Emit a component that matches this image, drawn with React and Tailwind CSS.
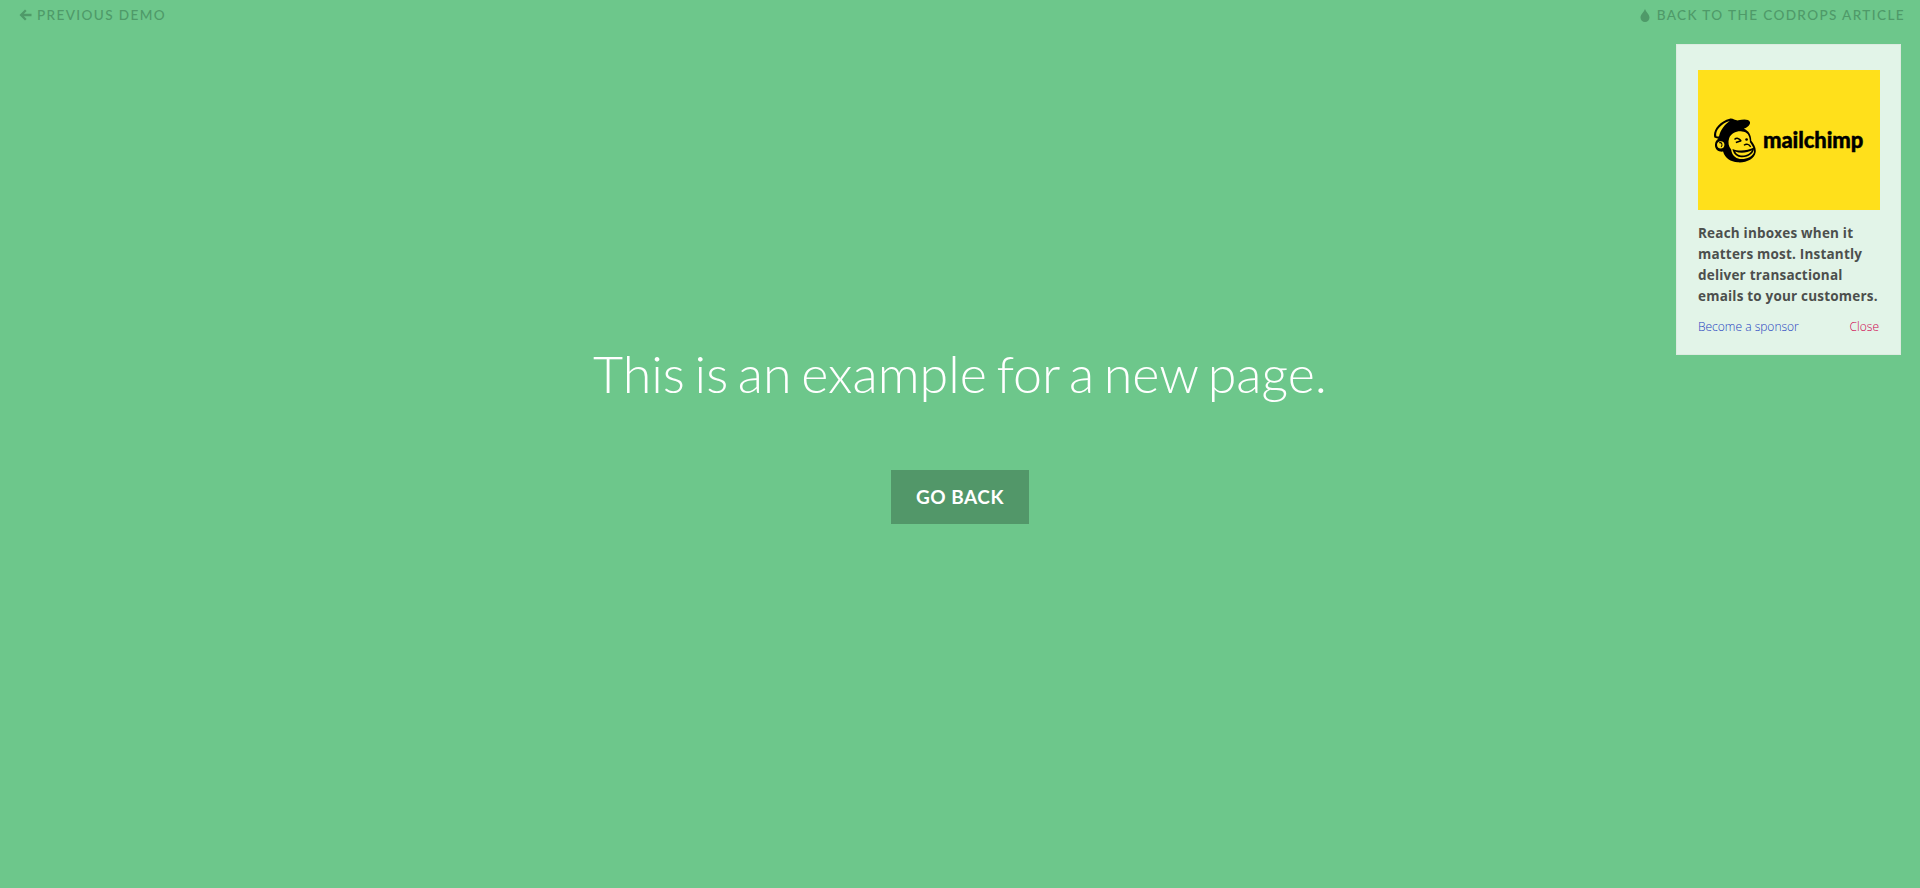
import React from "react";

const lato = { fontFamily: "Lato, sans-serif" };

const MonkeyLogo = () => (
  <svg width="43" height="45" viewBox="24 24 128 134" className="shrink-0">
    {/* head and cap silhouette */}
    <path d="M28 82 C22 62 42 34 74 26 C84 24 88 32 100 31 C112 28 130 26 134 36 C136 44 126 52 116 56 C130 62 138 74 138 92 C146 102 153 114 151 126 C148 146 122 158 98 156 C76 155 60 144 54 124 C40 126 28 116 30 102 C31 94 34 90 40 86 Z" fill="#000" />
    {/* yellow band of the cap */}
    <path d="M34 78 C30 62 48 40 74 33 C58 44 46 60 42 78 C40 79 37 80 34 78 Z" fill="#ffe01b" />
    {/* ear */}
    <circle cx="47" cy="104" r="13" fill="#ffe01b" stroke="#000" strokeWidth="4" />
    <path d="M42 98 C50 95 54 104 48 110" fill="none" stroke="#000" strokeWidth="3" />
    {/* face */}
    <path d="M72 84 C78 70 94 62 110 64 C126 64 134 76 134 96 C140 104 148 116 146 126 C142 140 122 148 104 146 C90 144 80 134 78 118 C70 108 68 96 72 84 Z" fill="#ffe01b" />
    {/* wink */}
    <path d="M88 88 C94 82 102 84 108 92 M92 97 L108 92" stroke="#000" strokeWidth="4.5" fill="none" />
    <circle cx="124" cy="88" r="4" fill="#000" />
    <path d="M116 105 C124 100 132 102 136 110" stroke="#000" strokeWidth="4" fill="none" />
    {/* mouth */}
    <path d="M82 116 C100 124 126 122 146 112 C148 130 126 144 104 140 C92 138 84 128 82 116 Z" fill="#000" />
    <path d="M90 124 C106 130 126 128 140 120 C134 132 118 138 104 135 C98 134 93 130 90 124 Z" fill="#ffe01b" />
  </svg>
);

export default function App() {
  return (
    <div className="relative flex h-screen flex-col bg-[#6dc78b] text-white" style={lato}>
      {/* top bar */}
      <div className="flex items-center justify-between pt-[7px] pr-[15px] pl-[19px] text-[13.6px] leading-[16px] tracking-[1.36px] text-[#4f9a69]">
        <a className="flex items-center gap-[5px] font-medium">
          <svg width="13" height="12" viewBox="0 0 13 12" fill="#4f9a69">
            <path d="M6 0.5 L7.6 2.1 L4.9 4.7 L12.5 4.7 L12.5 7.3 L4.9 7.3 L7.6 9.9 L6 11.5 L0.5 6 Z" />
          </svg>
          PREVIOUS DEMO
        </a>
        <a className="flex items-center gap-[7px] font-medium">
          <svg width="10" height="13" viewBox="0 0 10 13" fill="#4f9a69">
            <path d="M5 0 C6 3 9.5 5.5 9.5 8.5 C9.5 11 7.5 13 5 13 C2.5 13 0.5 11 0.5 8.5 C0.5 5.5 4 3 5 0 Z" />
          </svg>
          BACK TO THE CODROPS ARTICLE
        </a>
      </div>

      {/* main */}
      <main className="flex flex-col items-center pt-[316px]">
        <h1 className="text-[52px] leading-[68px] font-light [word-spacing:-4.5px]">This is an example for a new page.</h1>
        <a className="mt-[63px] flex h-[54px] w-[138px] items-center justify-center bg-[#529769] text-[19px] font-bold tracking-[0.5px]">
          GO BACK
        </a>
      </main>

      {/* sponsor card */}
      <aside className="absolute top-[44px] left-[1676px] h-[311px] w-[225px] border border-[#dcebe0] bg-[#e2f4e8] px-[21px] pt-[25px]" style={{ fontFamily: "'Open Sans', sans-serif" }}>
        <div className="flex h-[140px] w-[182px] items-center gap-[7px] bg-[#ffe01b] pl-[15px] text-black">
          <MonkeyLogo />
          <span className="text-[22px] leading-none font-black tracking-[-0.1px] [-webkit-text-stroke:0.4px_#000]" style={lato}>mailchimp</span>
        </div>
        <p className="mt-[13px] text-[13.5px] leading-[21px] font-bold tracking-[0.2px] text-[#4c4f4d]">
          Reach inboxes when it matters most. Instantly deliver transactional emails to your customers.
        </p>
        <div className="mt-[12px] flex justify-between text-[12px] leading-[16px] font-light">
          <a className="text-[#1f3fc0]">Become a sponsor</a>
          <a className="text-[#d1004f]">Close</a>
        </div>
      </aside>
    </div>
  );
}
